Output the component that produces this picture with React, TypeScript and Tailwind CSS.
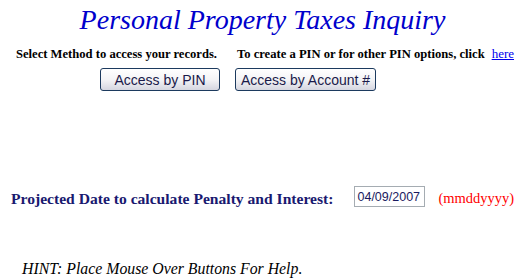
export default function App() {
  const serif = { fontFamily: '"Liberation Serif", "Times New Roman", serif' };
  return (
    <div className="w-[525px] h-[278px] bg-white overflow-hidden whitespace-nowrap" style={serif}>
      <h1 className="text-center italic text-[28px] leading-[32px] text-[#0000cc] pt-[4px] font-normal" style={serif}>
        Personal Property Taxes Inquiry
      </h1>
      <div className="flex items-baseline pl-[16px] mt-[10px] text-[12.6px] font-bold text-black leading-[16px]">
        <span className="shrink-0">Select Method to access your records.</span>
        <span className="shrink-0 ml-[20px]">To create a PIN or for other PIN options, click</span>
        <a href="#" className="shrink-0 ml-[7px] font-normal text-[13px] text-[#0000ee] underline">here</a>
      </div>
      <div className="flex gap-[15px] pl-[100px] mt-[6px]">
        <Btn className="w-[120px]">Access by PIN</Btn>
        <Btn className="w-[141px]">Access by Account #</Btn>
      </div>
      <div className="flex items-center pl-[11px] mt-[95px]">
        <span className="shrink-0 text-[15.6px] font-bold text-[#191970]">
          Projected Date to calculate Penalty and Interest:
        </span>
        <input
          defaultValue="04/09/2007"
          className="shrink-0 ml-[21px] mb-[5px] w-[71px] h-[21px] border border-[#a5acb2] px-[2px] text-[12.5px] text-[#1a1a60] outline-none"
          style={{ fontFamily: '"Liberation Sans", Arial, sans-serif' }}
        />
        <span className="shrink-0 ml-[13px] text-[14.5px] text-[#ff0000]">(mmddyyyy)</span>
      </div>
      <p className="pl-[22px] mt-[45px] italic text-[15.8px] text-black">
        HINT: Place Mouse Over Buttons For Help.
      </p>
    </div>
  );
}

function Btn({ children, className = "" }: { children: React.ReactNode; className?: string }) {
  return (
    <button
      className={`h-[23px] rounded-[3px] border border-[#1c3a5e] bg-gradient-to-b from-white via-[#f4f4f6] to-[#d5d6e0] text-[14px] text-[#1a1a4a] leading-none ${className}`}
      style={{ fontFamily: '"Liberation Sans", Arial, sans-serif' }}
    >
      {children}
    </button>
  );
}
